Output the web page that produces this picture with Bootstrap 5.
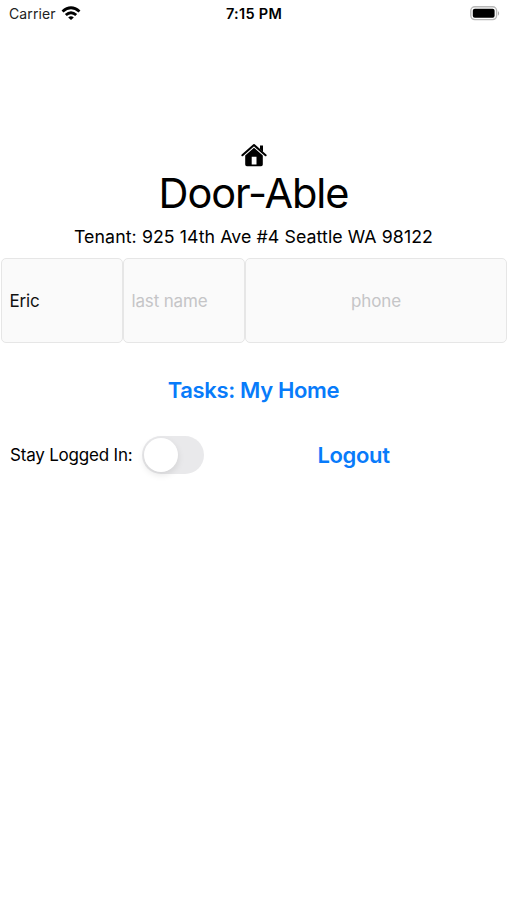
<!DOCTYPE html>
<html lang="en">
<head>
<meta charset="utf-8">
<meta name="viewport" content="width=device-width, initial-scale=1">
<title>Door-Able</title>
<link href="https://cdn.jsdelivr.net/npm/bootstrap@5.3.0/dist/css/bootstrap.min.css" rel="stylesheet">
<style>
  body { font-family: Inter, "Liberation Sans", sans-serif; color: #000; background: #fff; height: 900px; overflow: hidden; }
  .status-bar { height: 27px; padding: 0 6px 0 9px; line-height: 27px; }
  .carrier { font-size: 14px; letter-spacing: .1px; color: #222; }
  .wifi { margin-left: 5px; }
  .clock { font-size: 14.5px; font-weight: 600; letter-spacing: .3px; margin-right: 2px; }
  .brand { padding-top: 116px; }
  .brand svg { display: block; }
  .app-title { font-size: 41.5px; line-height: 50px; font-weight: 400; letter-spacing: -1.1px; }
  .address { font-size: 17.75px; line-height: 24px; letter-spacing: .08px; margin-top: 7px; }
  .fields { height: 85px; margin-top: 9px; padding-left: 1px; }
  .fields .form-control { background: #fafafa; border: 1px solid #e6e6e6; border-radius: 5px; padding: 2px 8px 0 8px; font-size: 17px; letter-spacing: -.15px; color: #111; }
  .fields .form-control::placeholder { color: #c5c5c7; opacity: 1; }
  .fields .name-field { flex: 0 0 122px; width: 122px; padding-left: 7.5px; }
  .ios-link { color: #087bfa; font-size: 22px; line-height: 28px; font-weight: 600; letter-spacing: -.35px; text-decoration: none; }
  .tasks { margin-top: 33px; }
  .session { height: 38px; margin-top: 32px; padding-left: 10px; }
  .stay { font-size: 17px; letter-spacing: -.2px; width: 131.5px; white-space: nowrap; padding-top: 1px; }
  .session .form-switch { padding: 0; min-height: 0; margin: 0; }
  .session .form-check-input { --bs-form-switch-bg: none; display: block; float: none; width: 62.5px; height: 38px; margin: 0; border: 0; border-radius: 19px; background: #e9e9eb; }
  .session .form-check-input::before { content: ""; display: block; width: 34px; height: 34px; margin: 2px; border-radius: 50%; background: #fff; box-shadow: 0 3px 7px rgba(0,0,0,.1); }
  .logout-area { padding-right: 4px; }
</style>
<script src="https://cdn.jsdelivr.net/npm/bootstrap@5.3.0/dist/js/bootstrap.bundle.min.js"></script>
</head>
<body>
<header class="status-bar row g-0 align-items-center">
  <div class="col d-flex align-items-center">
    <span class="carrier">Carrier</span>
    <svg class="wifi" width="20" height="16" viewBox="0 0 20 16" fill="none" stroke="#000" stroke-width="2.9" aria-hidden="true">
      <path d="M1.5 5.5Q10 -1.9 18.5 5.5"/><path d="M4.8 9Q10 4.4 15.2 9"/><path d="M10 14L7.2 11.4Q10 9 12.8 11.4Z" fill="#000" stroke="none"/>
    </svg>
  </div>
  <div class="col-auto clock">7:15 PM</div>
  <div class="col d-flex justify-content-end">
    <svg width="31" height="16" viewBox="0 0 31 16" aria-hidden="true">
      <rect x=".8" y=".8" width="25.8" height="12.8" rx="4" fill="#fff" stroke="#b8b8b8" stroke-width="1.4"/>
      <rect x="2.8" y="2.7" width="21.8" height="9" rx="2" fill="#000"/>
      <path d="M28 5Q30.3 7.3 28 9.7Z" fill="#aaa"/>
    </svg>
  </div>
</header>
<main>
  <div class="brand d-flex flex-column align-items-center">
    <svg width="26" height="25" viewBox="0 0 26 25" aria-hidden="true">
      <path d="M1.4 12.2L13 2L24.6 12.2" fill="none" stroke="#000" stroke-width="2.1" stroke-linecap="round" stroke-linejoin="round"/>
      <path d="M19 2.5H22V9L19 6.3Z"/>
      <path fill-rule="evenodd" d="M13 4.8L21.8 12.5V21.5Q21.8 23.2 20.1 23.2H5.9Q4.2 23.2 4.2 21.5V12.5ZM10.7 13.7V21.5H15.5V13.7Z"/>
    </svg>
    <h1 class="app-title mb-0">Door-Able</h1>
    <div class="address">Tenant: 925 14th Ave #4 Seattle WA 98122</div>
  </div>
  <div class="fields d-flex">
    <input class="form-control name-field" type="text" value="Eric" aria-label="First name">
    <input class="form-control name-field" type="text" placeholder="last name" aria-label="Last name">
    <input class="form-control flex-fill text-center" type="tel" placeholder="phone" aria-label="Phone">
  </div>
  <div class="tasks text-center"><a class="ios-link d-block" href="#">Tasks: My Home</a></div>
  <div class="session d-flex align-items-center">
    <label class="stay" for="stay">Stay Logged In:</label>
    <div class="form-check form-switch"><input class="form-check-input" type="checkbox" role="switch" id="stay"></div>
    <div class="logout-area flex-fill text-center"><a class="ios-link d-block" href="#">Logout</a></div>
  </div>
</main>
</body>
</html>
